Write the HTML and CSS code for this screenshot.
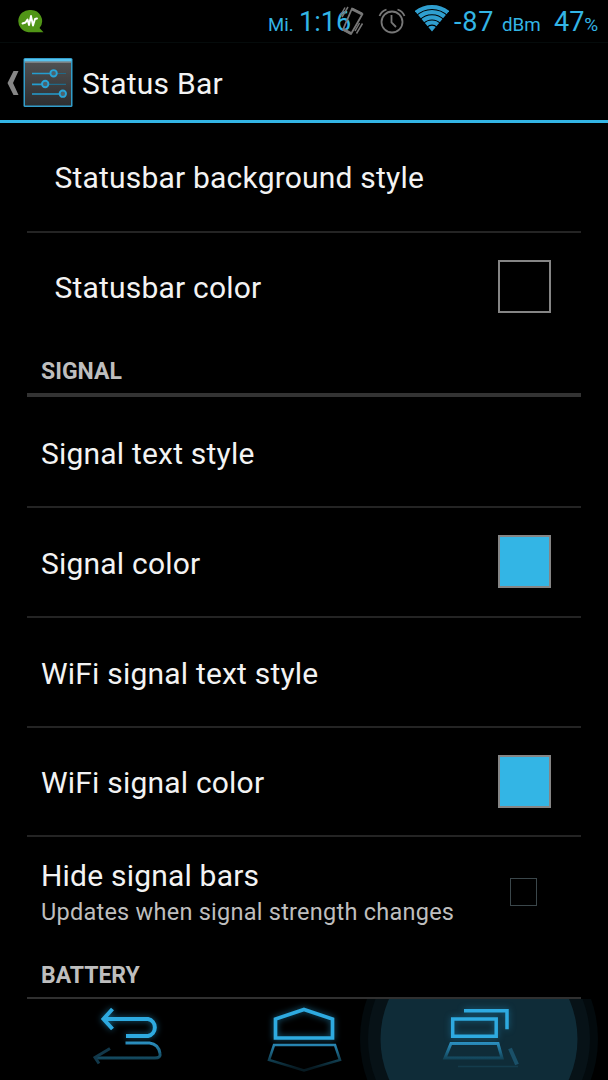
FILE: index.html
```
<!DOCTYPE html>
<html lang="en">
    <head>
        <meta charset="utf-8">
        <title>Status Bar</title>
        <meta name="viewport" content="width=device-width, initial-scale=1.0">
        <link rel="stylesheet" href="styles.css">
    </head>
    <body>
        <div class="statusbar">
            <svg class="notification" width="26" height="26" viewBox="17 8 26 26">
                <path d="M29.500 10a11 11 0 1 0 -2 22.300H42.500L38.500 28A11 11 0 0 0 29.500 10z" fill="#509516"/>
                <path d="M21.500 23.500l3-1 2-3 1.500 5.500 2-9 2 9.500 2-6.500 2-.500" fill="none" stroke="#fff" stroke-width="1.900" stroke-linejoin="round" stroke-linecap="round"/>
            </svg>
            <div class="clock"><span class="day">Mi.</span><span class="time">1:16</span></div>
            <svg class="vibrate" width="28" height="32" viewBox="338 5 28 32" fill="none" stroke="#777" stroke-width="1.500">
                <path d="M352 8.500l10.500 5.500-11.500 20-8-4.500z" stroke-width="1.800" stroke-linejoin="round"/>
                <path d="M352 9l10 5M343.500 29.500l7.500 4" stroke-width="3"/>
                <path d="M348 7l-6 10M345 7.500l-4.500 8M362.500 23.500l-6 10M359.500 23l-4.500 8"/>
            </svg>
            <svg class="alarm" width="28" height="28" viewBox="378 7 28 28" fill="none" stroke="#777" stroke-width="1.800">
                <circle cx="392" cy="22" r="10.500"/>
                <path d="M391.500 15v7.500l4.500 4.500M379.500 16q2-5 7-6.500M404.500 16q-2-5-7-6.500"/>
            </svg>
            <svg class="wifi" width="34" height="28" viewBox="415 4 34 28" fill="none" stroke="#2f9fd0" stroke-width="4.200">
                <clipPath id="wedge"><path d="M432 31.500L413.500 9.500 432 0l18.500 9.500z"/></clipPath>
                <g clip-path="url(#wedge)">
                    <circle cx="432" cy="32" r="25"/>
                    <circle cx="432" cy="32" r="19.800"/>
                    <circle cx="432" cy="32" r="14.600"/>
                    <circle cx="432" cy="32" r="9.500"/>
                    <circle cx="432" cy="32" r="6.300" fill="#2f9fd0" stroke="none"/>
                </g>
            </svg>
            <div class="signal">-87</div>
            <div class="unit">dBm</div>
            <div class="battery">47<span class="percent">%</span></div>
        </div>
        <header>
            <svg class="up" width="13" height="26" viewBox="7 70 13 26">
                <path d="M13.500 71h5L13 83l5.500 12h-5L7.500 83z" fill="#868686"/>
            </svg>
            <svg class="settings-icon" width="50" height="50" viewBox="23 58 50 50">
                <defs>
                    <linearGradient id="plate" x1="0" y1="0" x2="0" y2="1">
                        <stop offset="0" stop-color="#505152"/>
                        <stop offset="1" stop-color="#2d2e30"/>
                    </linearGradient>
                </defs>
                <rect x="23.500" y="58" width="49" height="49" rx="1.500" fill="#329dca"/>
                <rect x="25" y="61.500" width="46" height="44" fill="url(#plate)"/>
                <rect x="24.500" y="59" width="47" height="2.500" fill="#58c4ef"/>
                <rect x="25" y="61.500" width="46" height="1.200" fill="#8c9396"/>
                <g stroke="#249dce" stroke-width="1.700">
                    <path d="M32 73.500h18M32 84.300h10M32 94h27"/>
                    <path d="M56 73.500h10M48 84.300h18" stroke="#216987" stroke-width="1.200"/>
                </g>
                <g fill="#4d626c" stroke="#28a5d8" stroke-width="1.900">
                    <circle cx="53.600" cy="73.300" r="3.200"/>
                    <circle cx="45.200" cy="84" r="3.200"/>
                    <circle cx="62.800" cy="93.700" r="3.200"/>
                </g>
            </svg>
            <h1>Status Bar</h1>
        </header>
        <main>
            <div class="row child"><p>Statusbar background style</p></div>
            <div class="row child last"><p>Statusbar color</p><span class="swatch black"></span></div>
            <h2>SIGNAL</h2>
            <div class="row first"><p>Signal text style</p></div>
            <div class="row"><p>Signal color</p><span class="swatch"></span></div>
            <div class="row"><p>WiFi signal text style</p></div>
            <div class="row"><p>WiFi signal color</p><span class="swatch"></span></div>
            <div class="row last">
                <div class="text">
                    <p>Hide signal bars</p>
                    <p class="summary">Updates when signal strength changes</p>
                </div>
                <span class="checkbox"></span>
            </div>
            <h2 class="cut">BATTERY</h2>
        </main>
        <nav>
            <svg width="176" height="81" viewBox="40 999 176 81" fill="none">
                <defs>
                    <linearGradient id="fade" gradientUnits="userSpaceOnUse" x1="0" y1="1042" x2="0" y2="1068">
                        <stop offset="0" stop-color="#2b91c2"/>
                        <stop offset=".6" stop-color="#144a60"/>
                        <stop offset="1" stop-color="#071a22"/>
                    </linearGradient>
                </defs>
                <g class="glow" stroke="#2eaae0" stroke-width="4">
                    <path d="M104 1019h44a8.700 8.700 0 0 1 0 17h-22"/>
                    <path d="M112.500 1009l-9 10 9 10"/>
                </g>
                <path d="M125.500 1043h24q9 1 10.500 10.500q1 4.500-5 4.500H97" stroke="url(#fade)" stroke-width="3"/>
                <path d="M110 1048.500l-15 9 4 6" stroke="#12384a" stroke-width="3"/>
            </svg>
            <svg width="176" height="81" viewBox="216 999 176 81" fill="none">
                <path class="glow" d="M304 1009.500l28.500 9.500v19h-57v-19z" stroke="#2eaae0" stroke-width="3.700"/>
                <path d="M274 1045h61l5 15-36 10.500-35-10.500z" stroke="url(#fade)" stroke-width="2.500"/>
            </svg>
            <svg width="176" height="81" viewBox="392 999 176 81" fill="none">
                <circle cx="479" cy="1039" r="119" fill="#030a0d"/>
                <circle cx="479" cy="1039" r="111" fill="#071217"/>
                <circle cx="479" cy="1039" r="98.500" fill="#0f2c38"/>
                <g class="glow" stroke="#2eaae0" stroke-width="3.500">
                    <path d="M452.700 1019h43.500v17.300h-43.500z"/>
                    <path d="M464 1010.700h43v18.500"/>
                </g>
                <path d="M451 1043.500h47l4 14.500h-57z" stroke="url(#fade)" stroke-width="3"/>
                <path d="M510 1048.500l7 16" stroke="#1a5068" stroke-width="4"/>
                <path d="M458 1066.500h60" stroke="#143c4c" stroke-width="1.500"/>
            </svg>
        </nav>
    </body>
</html>
```
FILE: styles.css
```
* {
    box-sizing: border-box;
    margin: 0;
}

body {
    display: flex;
    flex-direction: column;
    width: 608px;
    height: 1080px;
    overflow: hidden;
    background: #000;
    color: #f3f3f3;
    font-family: Roboto, sans-serif;
}

svg {
    display: block;
    flex: none;
}

.statusbar {
    display: flex;
    flex: none;
    align-items: flex-start;
    height: 43px;
    padding-left: 17.500px;
    border-bottom: 1px solid #050b0b;
    color: #33b5e5;
    font-size: 27px;
    line-height: 44px;
    white-space: nowrap;
}

.notification {
    margin-top: 8px;
}

.clock {
    width: 70px;
    margin-left: 224.500px;
}

.day {
    display: inline-block;
    width: 31px;
    font-size: 18.500px;
}

.vibrate {
    margin-top: 5px;
}

.alarm {
    margin: 7px 0 0 12px;
}

.wifi {
    margin: 4px 0 0 9px;
}

.signal {
    width: 48px;
    margin-left: 5px;
    letter-spacing: .8px;
}

.unit {
    width: 52px;
    padding-top: 3px;
    font-size: 18.800px;
}

.battery {
    width: 53px;
}

.percent {
    font-size: 19px;
}

header {
    display: flex;
    flex: 0 0 80px;
    align-items: center;
    padding: 3px 0 0 7px;
    border-bottom: 3px solid #33b5e5;
}

.settings-icon {
    margin-left: 3px;
}

h1 {
    margin-left: 9px;
    padding-top: 1px;
    font-size: 30px;
    font-weight: 400;
    letter-spacing: .25px;
}

main {
    flex: 0 0 876px;
    padding: 0 27px;
}

.row {
    display: flex;
    align-items: center;
    justify-content: space-between;
    height: 109.750px;
    padding: 0 30px 0 14px;
    border-bottom: 2px solid #242424;
    font-size: 30px;
    letter-spacing: .2px;
}

.row > p {
    padding-top: 3px;
}

.first {
    height: 111px;
}

.child {
    height: 109.500px;
    padding-left: 27.500px;
}

.child > p {
    padding-top: 1px;
}

.last {
    border: 0;
}

.child.last {
    height: 108.500px;
}

.swatch {
    width: 53px;
    height: 53px;
    border: 2px solid #858585;
    background: #33b5e5;
}

.black {
    background: #000;
}

.summary {
    margin-top: 5px;
    color: #bebebe;
    font-size: 23.500px;
    letter-spacing: .25px;
}

.checkbox {
    width: 27px;
    height: 28px;
    margin-right: 14px;
    border: 1.500px solid #3b474b;
}

h2 {
    height: 56px;
    padding: 17px 0 0 14px;
    border-bottom: 4px solid #333;
    color: #bebebe;
    font-size: 23px;
    font-weight: 700;
}

.cut {
    height: 51.750px;
    padding-top: 14.500px;
    border-bottom: 2px solid #303030;
}

nav {
    display: flex;
    flex: 0 0 81px;
    padding-left: 40px;
    overflow: hidden;
}

nav svg {
    overflow: visible;
}

.glow {
    filter: drop-shadow(0 0 3px #176080);
}
```
